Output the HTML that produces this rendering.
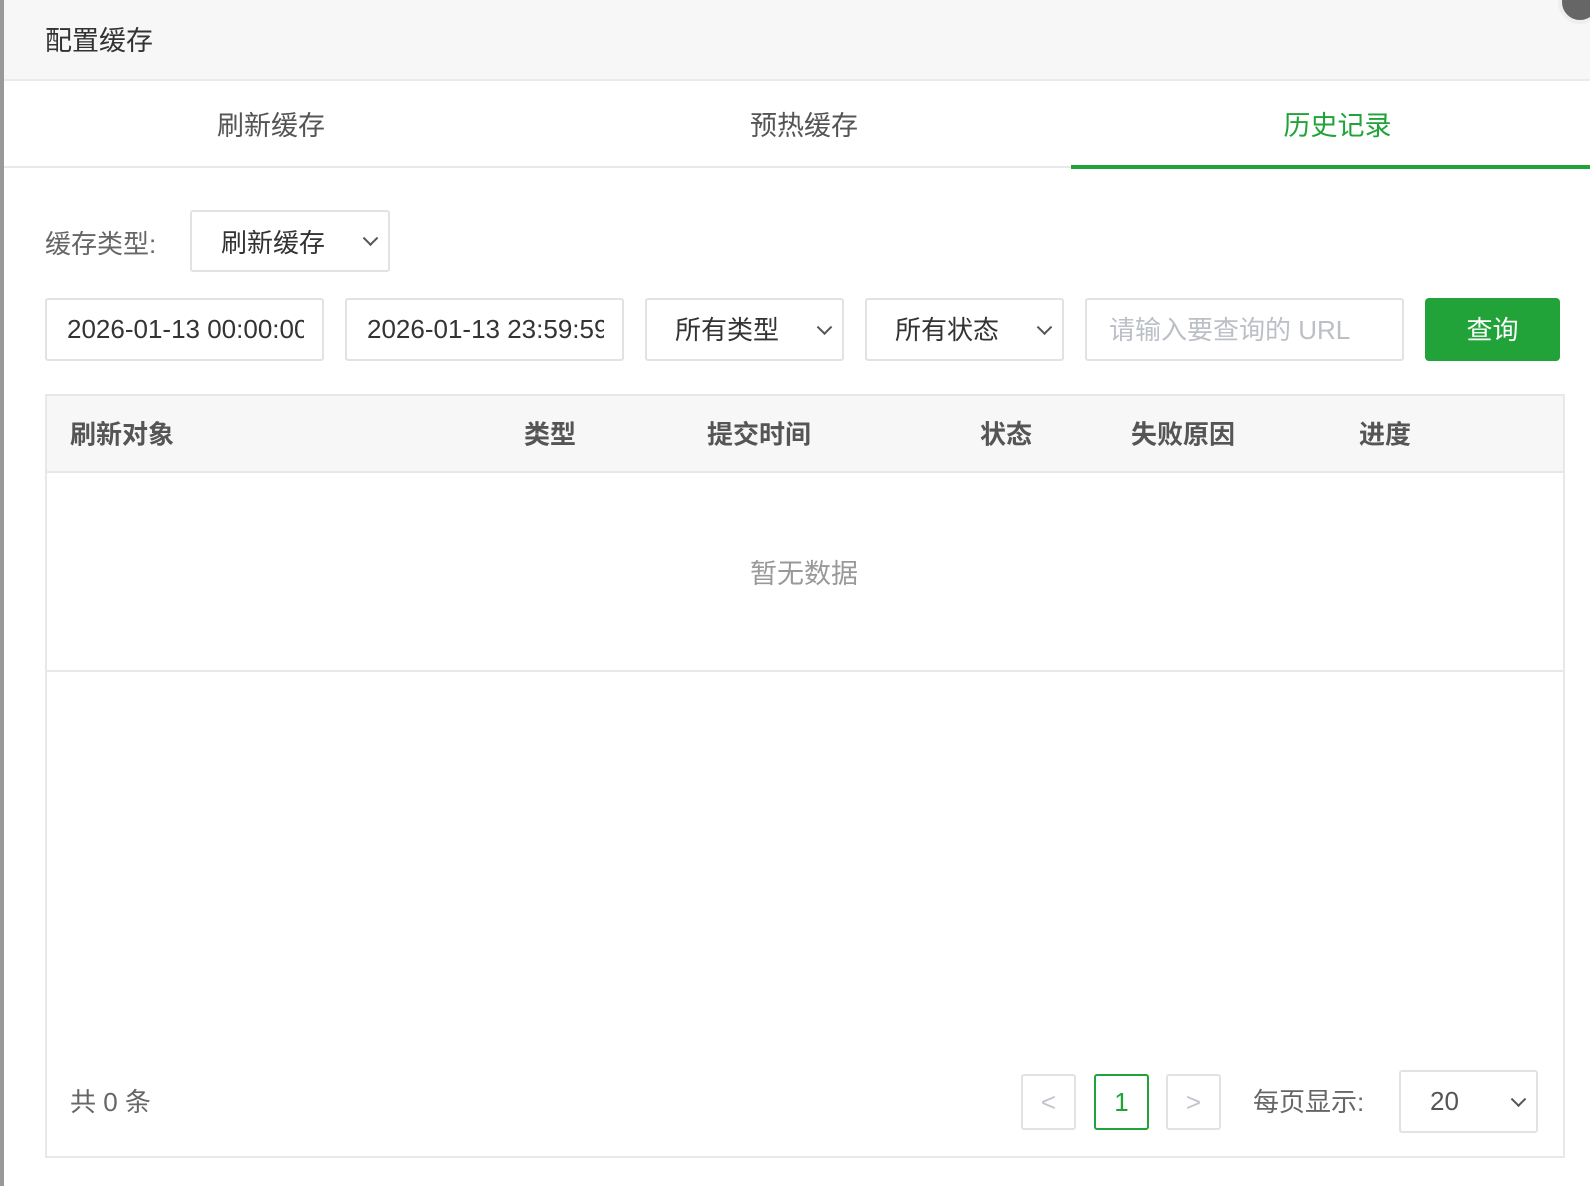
<!DOCTYPE html>
<html><head><meta charset="utf-8"><style>
*{box-sizing:border-box;margin:0;padding:0}
body{width:1590px;height:1186px;background:#fff;font-family:"Liberation Sans","Noto Sans CJK SC",sans-serif;position:relative;overflow:hidden;color:#333}
.a{position:absolute}
.box{position:absolute;border:2px solid #e2e2e2;border-radius:3px;background:#fff;font-size:26px;color:#333;display:flex;align-items:center;overflow:hidden;white-space:nowrap}
.chev{position:absolute;right:12px;top:50%;width:11px;height:11px;border-right:2px solid #555;border-bottom:2px solid #555;transform:translateY(-75%) rotate(45deg)}
.th{position:absolute;top:433px;transform:translateY(-50%);font-size:26px;font-weight:bold;color:#555}
</style></head><body>
<div class="a" style="left:0;top:0;width:4px;height:1186px;background:#999"></div>
<div class="a" style="left:4px;top:0;right:0;height:81px;background:#f7f7f7;border-bottom:2px solid #ebebeb"></div>
<div class="a" style="left:45px;top:19px;font-size:27px;color:#333">配置缓存</div>
<div class="a" style="left:1558px;top:-20px;width:44px;height:44px;border-radius:50%;background:#666;border:4px solid #eee"></div>
<div class="a" style="left:4px;top:166px;right:0;height:2px;background:#e8e8e8"></div>
<div class="a" style="left:4px;top:104px;width:534px;text-align:center;font-size:27px;color:#555">刷新缓存</div>
<div class="a" style="left:538px;top:104px;width:532px;text-align:center;font-size:27px;color:#555">预热缓存</div>
<div class="a" style="left:1078px;top:104px;width:519px;text-align:center;font-size:27px;color:#22a33a">历史记录</div>
<div class="a" style="left:1071px;top:165px;width:519px;height:4px;background:#22a33a"></div>
<div class="a" style="left:45px;top:224px;font-size:26px;color:#666">缓存类型:</div>
<div class="box" style="left:190px;top:210px;width:200px;height:62px;padding-left:29px">刷新缓存<span class="chev"></span></div>
<div class="box" style="left:45px;top:298px;width:279px;height:63px;padding-left:20px"><span style="display:block;width:237px;overflow:hidden;font-size:26px">2026-01-13 00:00:00</span></div>
<div class="box" style="left:345px;top:298px;width:279px;height:63px;padding-left:20px"><span style="display:block;width:237px;overflow:hidden;font-size:26px">2026-01-13 23:59:59</span></div>
<div class="box" style="left:645px;top:298px;width:199px;height:63px;padding-left:28px;padding-bottom:3px">所有类型<span class="chev"></span></div>
<div class="box" style="left:865px;top:298px;width:199px;height:63px;padding-left:28px;padding-bottom:3px">所有状态<span class="chev"></span></div>
<div class="box" style="left:1085px;top:298px;width:319px;height:63px;padding-left:22px;padding-bottom:3px;color:#bbbfc6">请输入要查询的 URL</div>
<div class="a" style="left:1425px;top:298px;width:135px;height:63px;padding-bottom:3px;background:#22a33a;border-radius:4px;color:#fff;font-size:26px;display:flex;align-items:center;justify-content:center">查询</div>
<div class="a" style="left:45px;top:394px;width:1520px;height:764px;border:2px solid #e8e8e8"></div>
<div class="a" style="left:47px;top:396px;width:1516px;height:77px;background:#f7f7f7;border-bottom:2px solid #e8e8e8"></div>
<div class="th" style="left:70px">刷新对象</div>
<div class="th" style="left:524px">类型</div>
<div class="th" style="left:707px">提交时间</div>
<div class="th" style="left:980px">状态</div>
<div class="th" style="left:1131px">失败原因</div>
<div class="th" style="left:1359px">进度</div>
<div class="a" style="left:47px;top:670px;width:1516px;height:2px;background:#e8e8e8"></div>
<div class="a" style="left:604px;top:552px;width:400px;text-align:center;font-size:27px;color:#999">暂无数据</div>
<div class="a" style="left:70px;top:1082px;font-size:26px;color:#666">共 0 条</div>
<div class="box" style="left:1021px;top:1074px;width:55px;height:56px;justify-content:center;color:#c0c4cc">&lt;</div>
<div class="box" style="left:1094px;top:1074px;width:55px;height:56px;justify-content:center;color:#22a33a;border-color:#22a33a">1</div>
<div class="box" style="left:1166px;top:1074px;width:55px;height:56px;justify-content:center;color:#c0c4cc">&gt;</div>
<div class="a" style="left:1253px;top:1082px;font-size:26px;color:#666">每页显示:</div>
<div class="box" style="left:1399px;top:1070px;width:139px;height:63px;padding-left:29px;color:#555">20<span class="chev"></span></div>
</body></html>
